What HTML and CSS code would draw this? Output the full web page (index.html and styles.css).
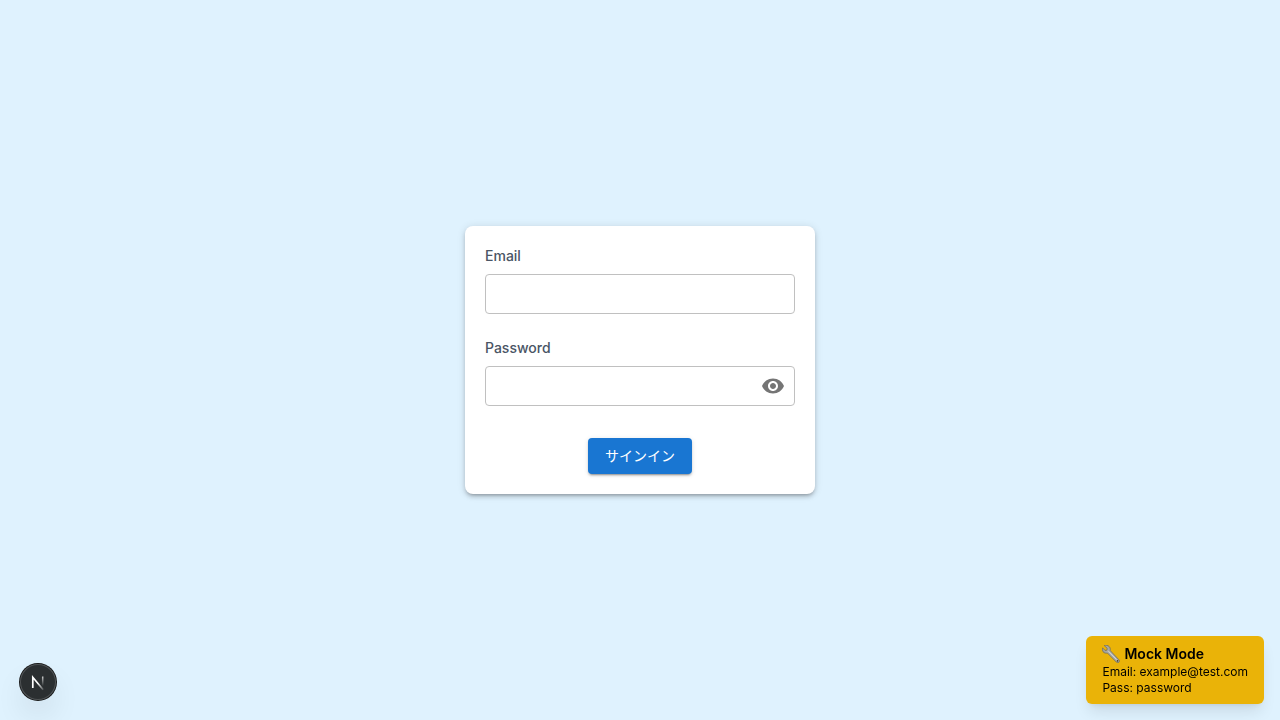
FILE: index.html
```html
<!DOCTYPE html>
<html lang="ja">
<head>
<meta charset="utf-8">
<meta name="viewport" content="width=device-width, initial-scale=1">
<title>サインイン</title>
<link rel="stylesheet" href="styles.css">
</head>
<body>
<main class="page">
  <form class="card">
    <div class="field">
      <label class="label" for="email">Email</label>
      <div class="control"><input class="input" id="email" type="email"></div>
    </div>
    <div class="field">
      <label class="label" for="password">Password</label>
      <div class="control">
        <input class="input" id="password" type="password">
        <button class="reveal" type="button" aria-label="Show password">
          <svg class="eye" viewBox="0 0 24 24" aria-hidden="true"><path d="M12 4.5C7 4.5 2.73 7.61 1 12c1.73 4.39 6 7.5 11 7.5s9.27-3.11 11-7.5c-1.73-4.39-6-7.5-11-7.5zM12 17c-2.76 0-5-2.24-5-5s2.24-5 5-5 5 2.24 5 5-2.24 5-5 5zm0-8c-1.66 0-3 1.34-3 3s1.34 3 3 3 3-1.34 3-3-1.34-3-3-3z"/></svg>
        </button>
      </div>
    </div>
    <button class="submit" type="submit">サインイン</button>
  </form>
</main>
<aside class="mock">
  <p class="mock-title">
    <svg class="wrench" viewBox="0 0 18 18" aria-hidden="true">
      <defs><linearGradient id="steel" x1="0" y1="1" x2="1" y2="0"><stop offset="0" stop-color="#6f6f6b"/><stop offset=".5" stop-color="#b0b0ab"/><stop offset="1" stop-color="#85857f"/></linearGradient></defs>
      <path d="M2.2.5 5.2 3.3 5 5.2 3 5.400.5 2.800C-.1 4.600.4 6.500 1.900 7.500c1.100.700 2.300.800 3.500.500l9 9.100c.700.700 1.800.800 2.500.100s.700-1.700 0-2.400L8.200 5.600c.300-1.600 0-3-1-4C6 .3 4-.1 2.200.5z" fill="url(#steel)" stroke="#66665f" stroke-width=".7"/>
      <path d="M6.500 6.300l8 8.200" stroke="#d6d6d2" stroke-width="1"/>
      <circle cx="15.600" cy="15.900" r=".8" fill="#4c3d16"/>
    </svg>
    <span>Mock Mode</span>
  </p>
  <p class="mock-line">Email: example@test.com</p>
  <p class="mock-line">Pass: password</p>
</aside>
<button class="devtools" type="button" aria-label="Open Next.js Dev Tools">
  <svg class="next" viewBox="0 0 36 36" fill="none" aria-hidden="true">
    <defs>
      <linearGradient id="fade-diagonal" x1="18" y1="19" x2="24" y2="26" gradientUnits="userSpaceOnUse"><stop stop-color="#fff"/><stop offset="1" stop-color="#fff" stop-opacity=".1"/></linearGradient>
      <linearGradient id="fade-stem" x1="23" y1="12" x2="23" y2="22" gradientUnits="userSpaceOnUse"><stop stop-color="#fff" stop-opacity=".8"/><stop offset="1" stop-color="#fff" stop-opacity="0"/></linearGradient>
    </defs>
    <path d="M12.800 24V13.300L23.200 25.700" stroke="url(#fade-diagonal)" stroke-width="1.700"/>
    <path d="M22.700 12.500v9.500" stroke="url(#fade-stem)" stroke-width="1.500"/>
  </svg>
</button>
</body>
</html>
```
FILE: styles.css
```css
* {
  box-sizing: border-box;
}

body {
  margin: 0;
  background: #dff2fe;
  font-family: Inter, "Noto Sans CJK JP", sans-serif;
  color: #000;
}

button {
  border: 0;
  padding: 0;
  font-family: inherit;
  cursor: pointer;
}

.page {
  display: flex;
  align-items: center;
  justify-content: center;
  min-height: 100vh;
}

.card {
  display: flex;
  flex-direction: column;
  gap: 24px;
  width: 100%;
  max-width: 350px;
  padding: 20px;
  border-radius: 8px;
  background: #fff;
  box-shadow: 0 3px 3px -2px rgba(0, 0, 0, .2), 0 3px 4px 0 rgba(0, 0, 0, .14), 0 1px 8px 0 rgba(0, 0, 0, .12);
}

.field {
  display: flex;
  flex-direction: column;
  gap: 8px;
}

.label {
  font-size: 14px;
  font-weight: 500;
  line-height: 20px;
  color: #4a5565;
}

.control {
  display: flex;
  align-items: center;
  height: 40px;
  padding-right: 9px;
  border: 1px solid #c0c0c0;
  border-radius: 4px;
}

.control:focus-within {
  border-color: #1976d2;
}

.input {
  flex: 1;
  min-width: 0;
  height: 100%;
  padding: 8px 13px;
  border: 0;
  outline: 0;
  background: none;
  font: inherit;
}

.reveal {
  display: flex;
  background: none;
}

.eye {
  width: 24px;
  height: 24px;
  fill: #757575;
}

.submit {
  align-self: center;
  margin-top: 8px;
  padding: 6px 17px;
  border-radius: 4px;
  background: #1976d2;
  color: #fff;
  font-size: 14px;
  font-weight: 400;
  line-height: 24px;
  box-shadow: 0 3px 1px -2px rgba(0, 0, 0, .2), 0 2px 2px 0 rgba(0, 0, 0, .14), 0 1px 5px 0 rgba(0, 0, 0, .12);
}

.mock {
  position: fixed;
  right: 16px;
  bottom: 16px;
  padding: 8px 16px;
  border-radius: 6px;
  background: #eab308;
  font-size: 12px;
  line-height: 16px;
  box-shadow: 0 10px 15px -3px rgba(0, 0, 0, .1), 0 4px 6px -4px rgba(0, 0, 0, .1);
}

.mock p {
  margin: 0;
}

.mock .mock-title {
  display: flex;
  align-items: center;
  gap: 4px;
  font-size: 14px;
  font-weight: 600;
  line-height: 20px;
}

.wrench {
  width: 18px;
  height: 18px;
}

.devtools {
  position: fixed;
  left: 20px;
  bottom: 20px;
  display: flex;
  width: 36px;
  height: 36px;
  border-radius: 50%;
  background: #2b2f31;
  box-shadow: 0 0 0 1px #171717, inset 0 0 0 1px #505456, 0 16px 32px -8px rgba(0, 0, 0, .24);
}

.next {
  width: 36px;
  height: 36px;
}
```
